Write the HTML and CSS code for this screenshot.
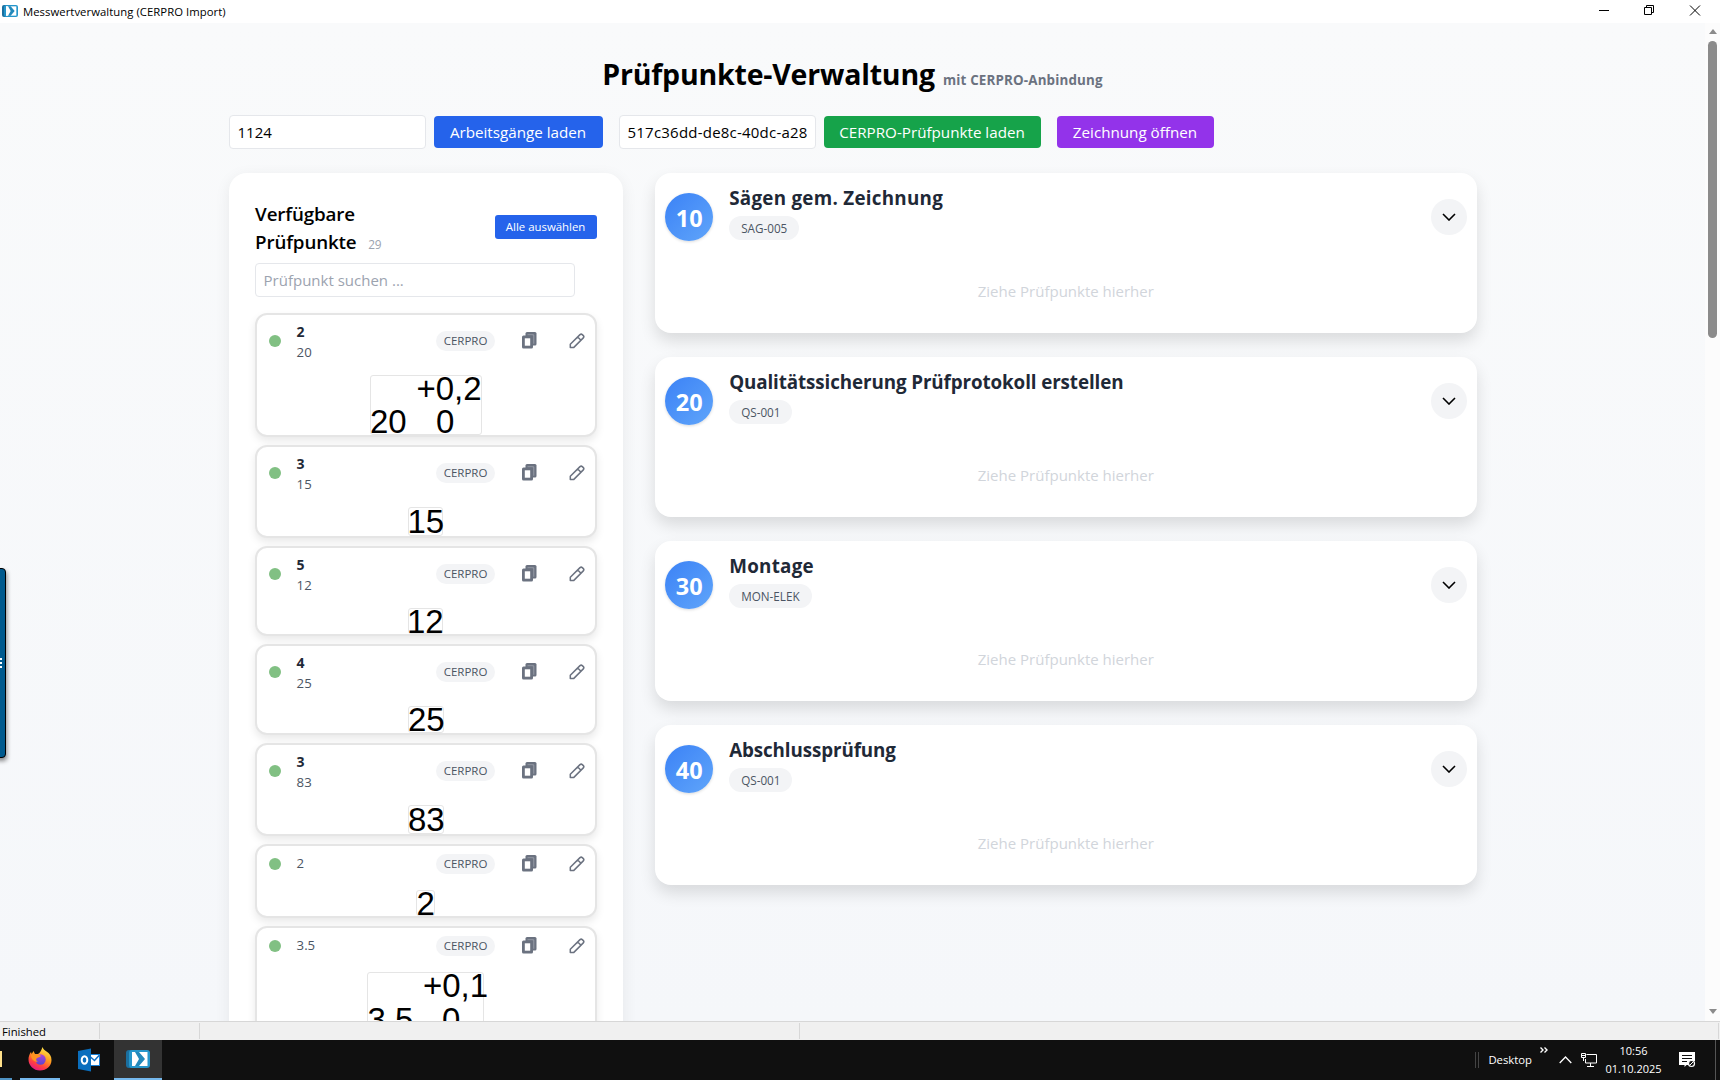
FILE: index.html
```
<!DOCTYPE html>
<html lang="de">
<head>
  <meta charset="UTF-8">
  <meta name="viewport" content="width=device-width, initial-scale=1.0">
  <title>Messwertverwaltung (CERPRO Import)</title>
  <link rel="stylesheet" href="styles.css">
</head>
<body>
  <!-- Icons -->
  <svg class="sprite" width="0" height="0">
    <symbol id="app" viewBox="0 0 24 20">
      <rect x="0" y="1" width="20" height="18" rx="3" fill="#1b6f9f"/>
      <rect x="3" y="1" width="21" height="18" rx="3" fill="#2596cb"/>
      <path d="M6 3h15.500v14H6z" fill="#fff"/>
      <path d="M8 3h5l6 7-6 7H8l4-7z" fill="#2389bb"/>
      <path d="M6 3h3l4 7-4 7H6z" fill="#fff"/>
    </symbol>
    <symbol id="copy" viewBox="0 0 15 17">
      <rect x="3.500" y="0" width="11" height="13.500" rx="1.500" fill="#6b7280"/>
      <path d="M5.500 2.800h6.300v9" fill="none" stroke="#a3a8b1" stroke-width=".8"/>
      <rect x="0" y="3.500" width="11" height="13" rx="1.500" fill="#6b7280"/>
      <rect x="2.800" y="6.300" width="5.400" height="7.400" fill="#fff"/>
    </symbol>
    <symbol id="pencil" viewBox="0 0 16 16">
      <path d="M1.300 11.200 11 1.600q1.200-1 2.300 0l1 1q1.100 1.100 0 2.300L4.600 14.600H1.300zM8.700 4l3.300 3.300" fill="none" stroke="#6b7280" stroke-width="1.500" stroke-linejoin="round"/>
    </symbol>
    <symbol id="chevron" viewBox="0 0 14 8">
      <path d="M1 1l6 6 6-6" fill="none" stroke="#000" stroke-width="1.600"/>
    </symbol>
  </svg>

  <header class="titlebar">
    <svg class="app-icon"><use href="#app"/></svg>
    <span class="caption">Messwertverwaltung (CERPRO Import)</span>
    <svg class="win-buttons" width="102" height="11" viewBox="0 0 102 11" fill="none" stroke="#000">
      <path d="M0 5.500h10M45.500 2.500h7v7h-7zM47.500 2.500v-2h7v7h-2M91 .5l10 10M101 .5l-10 10"/>
    </svg>
  </header>

  <div class="view">
    <main class="page">
      <div class="container">
        <h1>Prüfpunkte-Verwaltung <span>mit CERPRO-Anbindung</span></h1>

        <div class="toolbar">
          <div class="group">
            <input type="text" value="1124">
            <button class="btn blue">Arbeitsgänge laden</button>
          </div>
          <div class="group">
            <input class="uuid" type="text" value="517c36dd-de8c-40dc-a28">
            <button class="btn green">CERPRO-Prüfpunkte laden</button>
          </div>
          <button class="btn purple">Zeichnung öffnen</button>
        </div>

        <div class="columns">
          <section class="panel">
            <div class="panel-head">
              <h2>Verfügbare Prüfpunkte <span>29</span></h2>
              <button class="btn-small">Alle auswählen</button>
            </div>
            <input class="search" type="text" placeholder="Prüfpunkt suchen ...">
            <div class="list">
              <article class="point">
                <div class="row"><i class="dot"></i><div class="name"><b>2</b><span>20</span></div><em>CERPRO</em><svg class="copy"><use href="#copy"/></svg><svg class="pencil"><use href="#pencil"/></svg></div>
                <svg class="snip" width="112" height="60"><text x="45.500" y="24">+0,2</text><text x="-1" y="56.500">20</text><text x="65" y="56.500">0</text></svg>
              </article>
              <article class="point">
                <div class="row"><i class="dot"></i><div class="name"><b>3</b><span>15</span></div><em>CERPRO</em><svg class="copy"><use href="#copy"/></svg><svg class="pencil"><use href="#pencil"/></svg></div>
                <svg class="snip" width="35" height="29"><text x="-1.500" y="25">15</text></svg>
              </article>
              <article class="point">
                <div class="row"><i class="dot"></i><div class="name"><b>5</b><span>12</span></div><em>CERPRO</em><svg class="copy"><use href="#copy"/></svg><svg class="pencil"><use href="#pencil"/></svg></div>
                <svg class="snip" width="35" height="26"><text x="-2" y="24">12</text></svg>
              </article>
              <article class="point">
                <div class="row"><i class="dot"></i><div class="name"><b>4</b><span>25</span></div><em>CERPRO</em><svg class="copy"><use href="#copy"/></svg><svg class="pencil"><use href="#pencil"/></svg></div>
                <svg class="snip" width="36" height="27"><text x="-1" y="24">25</text></svg>
              </article>
              <article class="point">
                <div class="row"><i class="dot"></i><div class="name"><b>3</b><span>83</span></div><em>CERPRO</em><svg class="copy"><use href="#copy"/></svg><svg class="pencil"><use href="#pencil"/></svg></div>
                <svg class="snip" width="36" height="29"><text x="-1" y="25">83</text></svg>
              </article>
              <article class="point">
                <div class="row"><i class="dot"></i><div class="name"><span>2</span></div><em>CERPRO</em><svg class="copy"><use href="#copy"/></svg><svg class="pencil"><use href="#pencil"/></svg></div>
                <svg class="snip" width="19" height="26"><text x="-.5" y="24">2</text></svg>
              </article>
              <article class="point">
                <div class="row"><i class="dot"></i><div class="name"><span>3.5</span></div><em>CERPRO</em><svg class="copy"><use href="#copy"/></svg><svg class="pencil"><use href="#pencil"/></svg></div>
                <svg class="snip" width="117" height="62"><text x="55" y="24">+0,1</text><text x="-.5" y="58">3,5</text><text x="74" y="58">0</text></svg>
              </article>
            </div>
          </section>

          <div class="operations">
            <section class="op">
              <div class="op-head"><b class="num">10</b><div class="op-text"><h3 class="wide">Sägen gem. Zeichnung</h3><span class="pill">SAG-005</span></div><button class="toggle"><svg><use href="#chevron"/></svg></button></div>
              <p>Ziehe Prüfpunkte hierher</p>
            </section>
            <section class="op">
              <div class="op-head"><b class="num">20</b><div class="op-text"><h3>Qualitätssicherung Prüfprotokoll erstellen</h3><span class="pill">QS-001</span></div><button class="toggle"><svg><use href="#chevron"/></svg></button></div>
              <p>Ziehe Prüfpunkte hierher</p>
            </section>
            <section class="op">
              <div class="op-head"><b class="num">30</b><div class="op-text"><h3 class="wide">Montage</h3><span class="pill">MON-ELEK</span></div><button class="toggle"><svg><use href="#chevron"/></svg></button></div>
              <p>Ziehe Prüfpunkte hierher</p>
            </section>
            <section class="op">
              <div class="op-head"><b class="num">40</b><div class="op-text"><h3>Abschlussprüfung</h3><span class="pill">QS-001</span></div><button class="toggle"><svg><use href="#chevron"/></svg></button></div>
              <p>Ziehe Prüfpunkte hierher</p>
            </section>
          </div>
        </div>
      </div>
    </main>
    <div class="scrollbar">
      <i class="up"></i>
      <i class="thumb"></i>
      <i class="down"></i>
    </div>
  </div>

  <!-- angedocktes Seitenmenü am linken Rand -->
  <div class="dock"><i></i><i></i><i></i></div>

  <div class="statusbar">
    <span class="s1">Finished</span><span class="s2"></span><span class="s3"></span><span class="s4"></span>
  </div>

  <footer class="taskbar">
    <div class="task cut"><i></i></div>
    <div class="task firefox">
      <svg width="24" height="24" viewBox="0 0 24 24">
        <defs>
          <linearGradient id="ff" x1=".8" y1="0" x2=".3" y2="1"><stop offset="0" stop-color="#fff14f"/><stop offset=".45" stop-color="#ff9a1f"/><stop offset=".75" stop-color="#ff4040"/><stop offset="1" stop-color="#e31587"/></linearGradient>
          <linearGradient id="fp" x1="0" y1="0" x2="0" y2="1"><stop offset="0" stop-color="#b046d8"/><stop offset="1" stop-color="#5a45d0"/></linearGradient>
        </defs>
        <path d="M14.500 0c.5 2 2 3 4 4.500 3 2 5 4.500 5 8.500 0 6-5 10.500-11.500 10.500S.5 18.500.5 12.500c0-3 1-5.500 2.500-7.500l.7 2L5.500 4l1.500 3h3c2-1 3.500-4 4.500-7z" fill="url(#ff)"/>
        <circle cx="12.500" cy="12.500" r="5.200" fill="url(#fp)"/>
        <path d="M3 8c3-1.500 6-1.500 10 .8-1 1.700-2.500 1.500-4 2.200-1.500 1-1 3 1 4-4 0-7-3-7-7z" fill="#ff9420"/>
      </svg>
    </div>
    <div class="task outlook">
      <svg width="24" height="24" viewBox="0 0 24 24">
        <rect x="12.500" y="6.500" width="10" height="11" fill="#fff" stroke="#1a7fd4"/>
        <path d="M13 8.500l4.500 4 5-5.500" fill="none" stroke="#0f6fc5" stroke-width="1.500"/>
        <path d="M1 3l13-2.500v23L1 21z" fill="#0a6ebd"/>
        <ellipse cx="7.500" cy="12" rx="2.800" ry="3.800" fill="none" stroke="#fff" stroke-width="2"/>
      </svg>
    </div>
    <div class="task active"><svg width="24" height="20"><use href="#app"/></svg></div>

    <div class="tray">
      <i class="grip"></i>
      <span class="desk">Desktop</span>
      <svg class="more" width="8" height="6" viewBox="0 0 8 6" fill="none" stroke="#fff" stroke-width="1.400"><path d="M.5.500 3 3 .5 5.500M4.500.500 7 3 4.500 5.500"/></svg>
      <svg class="caret" width="13" height="8" viewBox="0 0 13 8" fill="none" stroke="#fff" stroke-width="1.300"><path d="M.7 7 6.500 1l5.800 6"/></svg>
      <svg class="net" width="17" height="14" viewBox="0 0 17 14" fill="none" stroke="#fff"><path d="M5.500 1.500h10v8.500h-11v-4M9.500 10v3M6 13.500h7M.5.500h4v4h-4zM2.500 4.500v3.500M1 2.500h3"/></svg>
      <div class="clock"><span>10:56</span><span>01.10.2025</span></div>
      <svg class="note" width="17" height="16" viewBox="0 0 17 16"><path d="M0 0h16v9h-6v4H7.500L5.500 15v-2H0z" fill="#fff"/><path d="M3 3.500h10M3 6.500h10M3 9.500h5" stroke="#101010"/><circle cx="12.500" cy="11.500" r="3" fill="#101010" stroke="#fff" stroke-width="1.200"/><path d="M10.500 13.500l4-4" stroke="#fff"/></svg>
      <i class="peek"></i>
    </div>
  </footer>
</body>
</html>
```
FILE: styles.css
```
*{margin: 0; padding: 0; box-sizing: border-box;}
body{
  width: 1720px; height: 1080px;
  display: flex; flex-direction: column;
  overflow: hidden;
  position: relative;
  background: #fff; color: #000;
  font-family: "Open Sans", "Noto Sans", sans-serif;
  font-size: 15px;
}
button, input{font: inherit; border: none;}
i, em{font-style: normal; display: block;}
svg{display: block; flex: none;}
.sprite{position: absolute;}

/* Fenstertitel */
.titlebar{
  height: 23px; flex: none;
  display: flex; align-items: center;
  padding: 0 19px 0 2px;
}
.app-icon{width: 16px; height: 14px; margin-top: -1px;}
.caption{margin-left: 5px; font-size: 11.300px; letter-spacing: 0.050px;}
.win-buttons{margin: -3px 0 0 auto;}

.view{flex: 1; min-height: 0; display: flex;}
.page{
  flex: 1; overflow: hidden;
  background: linear-gradient(#f9fafb, #f5f7fa);
}
.container{width: 1280px; margin: 0 auto; padding: 33px 16px 0;}
h1{
  height: 36px; line-height: 36px;
  margin-bottom: 23px;
  text-align: center;
  font-size: 28.500px; font-weight: 700;
  letter-spacing: -0.200px;
}
h1 span{margin-left: 1px; font-size: 13.400px; letter-spacing: 0.150px; color: #6b7280;}

/* Eingaben und Buttons */
.toolbar{display: flex; align-items: center; gap: 16px;}
.group{display: flex; align-items: center; gap: 8px;}
input{
  width: 197px; height: 34px;
  padding: 0 8px;
  border: 1px solid #e5e7eb; border-radius: 4px;
  background: #fff;
}
.uuid{letter-spacing: 0.220px;}
input::placeholder{color: #9ca3af;}
.btn{
  height: 32px; border-radius: 4px;
  color: #fff; white-space: nowrap;
  font-size: 15.200px;
}
.blue{width: 169px; background: #2563eb;}
.green{width: 217px; background: #16a34a;}
.purple{width: 157px; background: #9333ea;}

.columns{
  display: grid; grid-template-columns: 394.670px 1fr;
  gap: 32px;
  margin-top: 24px;
}

/* linke Liste */
.panel{
  height: 1100px;
  padding: 26.600px;
  border-radius: 18px;
  background: #fff;
  box-shadow: 0 4px 16px rgba(0,0,0,.07);
}
.panel-head{display: flex; justify-content: space-between; align-items: center;}
h2{width: 150px; font-size: 18.800px; line-height: 28px; font-weight: 600; letter-spacing: -0.150px;}
h2 span{margin-left: 7px; font-size: 11.800px; font-weight: 400; color: #9ca3af;}
.btn-small{
  width: 102px; height: 24px;
  margin-top: -4px;
  border-radius: 3px;
  background: #2563eb; color: #fff;
  font-size: 11.400px;
}
.search{display: block; width: 320px; margin-top: 5.200px; padding-left: 7.500px;}
.list{display: flex; flex-direction: column; gap: 8px; margin-top: 16px;}
.point{
  border: 2px solid #e5e5e5; border-radius: 12px;
  background: #fff;
  padding-top: 6px;
  box-shadow: 0 4px 8px rgba(0,0,0,.09);
}
.row{
  min-height: 24px;
  display: flex; align-items: center;
  padding: 0 9.500px 0 12px;
}
.dot{width: 12px; height: 12px; border-radius: 50%; background: #81c083;}
.name{flex: 1; margin-left: 15.500px; font-size: 13.200px; line-height: 21px; color: #4b5563;}
.name b, .name span{display: block;}
.name b{color: #1f2937; font-size: 14px;}
.name b + span{margin-bottom: -2px;}
.row em{
  width: 59px; height: 20px; line-height: 20px;
  border-radius: 10px;
  background: #f3f4f6; color: #4b5563;
  text-align: center; font-size: 11.500px;
}
.copy{width: 15px; height: 17px; margin-left: 27px;}
.pencil{width: 16px; height: 16px; margin-left: 32px;}
.snip{
  margin: 14px auto 0;
  border: 1px solid #e5e5e5; border-radius: 3px;
  overflow: visible;
  font-family: "Liberation Sans", Arial, sans-serif;
  font-size: 33px;
}

/* Arbeitsgänge */
.operations{display: flex; flex-direction: column; gap: 24px;}
.op{
  height: 160px;
  padding: 11px 10px;
  border-radius: 16px;
  background: #fff;
  box-shadow: 0 8px 16px rgba(0,0,0,.12);
}
.op-head{display: flex; align-items: center; height: 66px;}
.num{
  width: 48px; height: 48px; line-height: 50px;
  border-radius: 50%;
  background: linear-gradient(135deg, #3b82f6, #60a5fa);
  color: #fff; text-align: center; font-size: 23.500px;
  box-shadow: 0 1px 3px rgba(0,0,0,.15);
}
.op-text{flex: 1; margin-left: 16px; height: 66px;}
h3{font-size: 18.800px; line-height: 28px; font-weight: 700; letter-spacing: -0.100px; color: #1f2937;}
.wide{letter-spacing: 0.280px;}
.pill{
  display: inline-block;
  height: 24px; line-height: 25px;
  margin-top: 4px; padding: 0 12px;
  border-radius: 12px;
  background: #f3f4f6; color: #4b5563;
  font-size: 11.700px;
}
.toggle{
  width: 36px; height: 36px;
  display: flex; align-items: center; justify-content: center;
  border-radius: 50%;
  background: #f3f4f6;
}
.toggle svg{width: 14px; height: 8px;}
.op p{margin-top: 29px; line-height: 24px; text-align: center; color: #d1d5db;}

.scrollbar{
  width: 15px; background: #fcfcfc;
  display: flex; flex-direction: column; align-items: center;
  padding: 6px 0 7px;
}
.up, .down{border: 4.500px solid transparent;}
.up{border-top: none; border-bottom: 5px solid #8b8b8b;}
.down{border-bottom: none; border-top: 5px solid #8b8b8b; margin-top: auto;}
.thumb{width: 9px; height: 297px; margin-top: 7px; border-radius: 5px; background: #8b8b8b;}

.dock{
  position: absolute; left: -6px; top: 568px;
  width: 12px; height: 190px;
  padding: 89px 0 0 5px;
  border: 1px solid #000; border-radius: 4px;
  background: #005a8e;
  box-shadow: 1px 3px 4px rgba(0,0,0,.45);
}
.dock i{width: 2px; height: 2px; margin-bottom: 2px; background: #fff;}

.statusbar{
  height: 19px; flex: none;
  display: flex; align-items: center;
  border-top: 1px solid #d7d7d7;
  background: #f0f0f0;
  font-size: 11.300px;
}
.statusbar span{height: 16px; line-height: 17px; border-right: 1px solid #d7d7d7; padding-left: 2px;}
.s1{width: 100px;}
.s2{width: 100px;}
.s3{width: 600px;}
.s4{width: 919px;}

/* Windows-Taskleiste */
.taskbar{
  height: 40px; flex: none;
  display: flex;
  background: #101010; color: #fff;
}
.task{
  height: 40px; width: 48px;
  display: flex; align-items: center; justify-content: center;
}
.cut{width: 12px; margin-right: 8px; justify-content: flex-start; border-bottom: 2px solid #4f93c4;}
.cut i{width: 2px; height: 16px; background: #ffe08a;}
.firefox{width: 40px; border-bottom: 2px solid #76b9ed;}
.outlook{width: 54px; padding-left: 4px;}
.active{background: #333; border-bottom: 2px solid #76b9ed;}
.tray{
  margin-left: auto;
  display: flex; align-items: center;
  font-size: 11.300px;
}
.grip{width: 4px; height: 16px; border: 1px solid #444; border-width: 0 1px;}
.desk{margin: -2px 0 0 9px;}
.more{margin: -20px 0 0 8px;}
.caret{margin-left: 11px;}
.net{margin-left: 9px;}
.clock{width: 73px; margin-left: -1px; text-align: center; line-height: 18px; font-size: 11px;}
.clock span{display: block;}
.note{margin-left: 9px;}
.peek{width: 5px; height: 40px; margin-left: 19px; border-left: 1px solid #555;}
```
